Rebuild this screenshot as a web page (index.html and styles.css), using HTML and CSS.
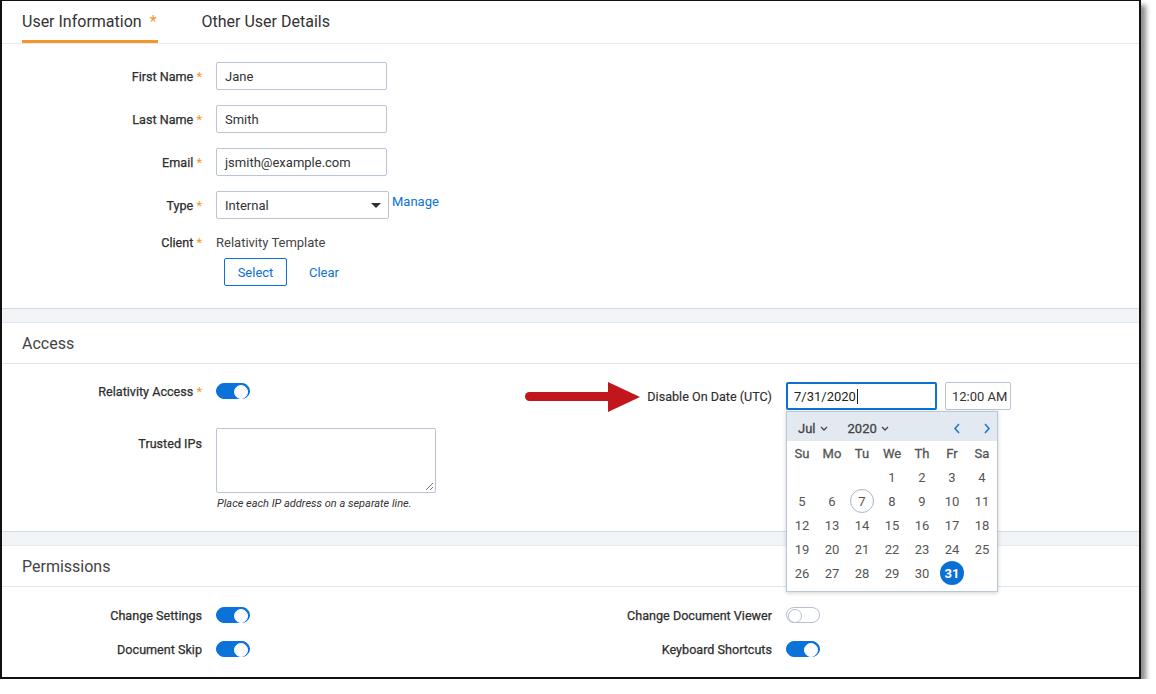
FILE: index.html
```html
<!DOCTYPE html>
<html>
<head lang="en">
    <meta charset="UTF-8">
    <title>User Information</title>
    <link rel="stylesheet" href="styles.css">
</head>
<body>
<div class="frame">
    <div class="tabs">
        <div class="tab active">User Information <span class="req tab-req">*</span></div>
        <div class="tab">Other User Details</div>
    </div>

    <!-- 基本信息 -->
    <div class="section first">
        <div class="row">
            <div class="label">First Name <span class="req">*</span></div>
            <div class="input">Jane</div>
        </div>
        <div class="row">
            <div class="label">Last Name <span class="req">*</span></div>
            <div class="input">Smith</div>
        </div>
        <div class="row">
            <div class="label">Email <span class="req">*</span></div>
            <div class="input">jsmith@example.com</div>
        </div>
        <div class="row">
            <div class="label">Type <span class="req">*</span></div>
            <div class="input select">Internal <span class="caret"></span></div>
            <a class="link manage">Manage</a>
        </div>
        <div class="row text-row">
            <div class="label">Client <span class="req">*</span></div>
            <div class="value">Relativity Template</div>
        </div>
        <div class="row btn-row">
            <div class="btn">Select</div>
            <a class="link">Clear</a>
        </div>
    </div>

    <div class="sep"></div>

    <!-- Access -->
    <div class="section">
        <div class="section-head">Access</div>
        <div class="cols">
            <div class="col left">
                <div class="row toggle-row">
                    <div class="label">Relativity Access <span class="req">*</span></div>
                    <div class="toggle on"></div>
                </div>
                <div class="row area-row">
                    <div class="label">Trusted IPs</div>
                    <div>
                        <div class="textarea"><span class="grip"></span></div>
                        <div class="hint">Place each IP address on a separate line.</div>
                    </div>
                </div>
            </div>
            <div class="col right">
                <div class="row">
                    <div class="label plain">Disable On Date (UTC)</div>
                    <div class="date-wrap">
                        <div class="input date">7/31/2020<span class="cursor"></span></div>
                        <div class="calendar">
                            <div class="cal-head">
                                <span class="cal-sel">Jul <svg width="8" height="5" viewBox="0 0 8 5"><path d="M1 1l3 3 3-3" fill="none" stroke="#444" stroke-width="1.3"/></svg></span>
                                <span class="cal-sel">2020 <svg width="8" height="5" viewBox="0 0 8 5"><path d="M1 1l3 3 3-3" fill="none" stroke="#444" stroke-width="1.3"/></svg></span>
                                <span class="cal-nav">
                                    <svg width="8" height="11" viewBox="0 0 8 11"><path d="M6 1L2 5.5 6 10" fill="none" stroke="#1f78d1" stroke-width="1.6"/></svg>
                                    <svg width="8" height="11" viewBox="0 0 8 11"><path d="M2 1l4 4.5L2 10" fill="none" stroke="#1f78d1" stroke-width="1.6"/></svg>
                                </span>
                            </div>
                            <div class="cal-grid">
                                <span class="dn">Su</span><span class="dn">Mo</span><span class="dn">Tu</span><span class="dn">We</span><span class="dn">Th</span><span class="dn">Fr</span><span class="dn">Sa</span>
                                <span></span><span></span><span></span><span>1</span><span>2</span><span>3</span><span>4</span>
                                <span>5</span><span>6</span><span><i class="today">7</i></span><span>8</span><span>9</span><span>10</span><span>11</span>
                                <span>12</span><span>13</span><span>14</span><span>15</span><span>16</span><span>17</span><span>18</span>
                                <span>19</span><span>20</span><span>21</span><span>22</span><span>23</span><span>24</span><span>25</span>
                                <span>26</span><span>27</span><span>28</span><span>29</span><span>30</span><span><i class="picked">31</i></span><span></span>
                            </div>
                        </div>
                    </div>
                    <div class="input time">12:00 AM</div>
                </div>
            </div>
        </div>
    </div>

    <div class="sep"></div>

    <!-- Permissions -->
    <div class="section">
        <div class="section-head">Permissions</div>
        <div class="cols perms">
            <div class="col left">
                <div class="row toggle-row">
                    <div class="label">Change Settings</div>
                    <div class="toggle on"></div>
                </div>
                <div class="row toggle-row">
                    <div class="label">Document Skip</div>
                    <div class="toggle on"></div>
                </div>
            </div>
            <div class="col right">
                <div class="row toggle-row">
                    <div class="label">Change Document Viewer</div>
                    <div class="toggle"></div>
                </div>
                <div class="row toggle-row">
                    <div class="label">Keyboard Shortcuts</div>
                    <div class="toggle on"></div>
                </div>
            </div>
        </div>
    </div>

    <!-- 红色箭头标注 -->
    <svg class="arrow" width="118" height="32" viewBox="0 0 118 32">
        <rect x="1" y="11" width="88" height="9" rx="4.5" fill="#c1161c"/>
        <polygon points="84,1 116,16 84,31" fill="#c1161c"/>
    </svg>
</div>
</body>
</html>
```

FILE: styles.css
```css
* {
    margin: 0;
    padding: 0;
    box-sizing: border-box;
}

body {
    font-family: Roboto, "Liberation Sans", Arial, sans-serif;
    font-size: 13px;
    color: #333;
    background: #fff;
}

.frame {
    width: 1141px;
    height: 679px;
    border: 1px solid #111;
    border-width: 1px 2px 2px 2px;
    box-shadow: 5px 5px 5px rgba(0, 0, 0, 0.45);
    position: relative;
    overflow: hidden;
    background: #fff;
}

/* tabs */
.tabs {
    display: flex;
    height: 43px;
    border-bottom: 1px solid #e6e9ef;
    padding-left: 20px;
}

.tab {
    display: flex;
    align-items: center;
    height: 42px;
    font-size: 16px;
    color: #333;
    margin-right: 44px;
    border-bottom: 3px solid transparent;
    padding-top: 1px;
}

.tab.active {
    border-bottom-color: #f5962a;
}

.tab-req {
    margin-left: 8px;
    margin-right: 1px;
}

.req {
    color: #f5962a;
}

/* sections */
.section.first {
    padding: 18px 0 22px;
}

.sep {
    height: 15px;
    background: #f2f5f8;
    border-top: 1px solid #d3dae3;
    border-bottom: 1px solid #e3e8ee;
}

.section-head {
    height: 41px;
    border-bottom: 1px solid #e1e6ec;
    font-size: 16px;
    color: #444;
    padding-left: 20px;
    display: flex;
    align-items: center;
}

.row {
    display: flex;
    align-items: center;
    height: 28px;
    margin-bottom: 15px;
}

.label {
    width: 200px;
    text-align: right;
    font-size: 12.6px;
    color: #2e2e2e;
    -webkit-text-stroke: 0.25px #2e2e2e;
    margin-right: 14px;
    flex-shrink: 0;
}

.label .req {
    -webkit-text-stroke: 0;
    font-size: 13px;
}

.label.plain {
    -webkit-text-stroke: 0.15px #2e2e2e;
}

.input {
    width: 171px;
    height: 28px;
    border: 1px solid #b9c5d6;
    border-radius: 2px;
    padding: 0 8px;
    display: flex;
    align-items: center;
    color: #333;
    white-space: nowrap;
}

.select {
    width: 173px;
    justify-content: space-between;
}

.caret {
    width: 0;
    height: 0;
    border-left: 5px solid transparent;
    border-right: 5px solid transparent;
    border-top: 5px solid #333;
    margin-right: -1px;
}

.link {
    color: #0b72d9;
    cursor: pointer;
}

.manage {
    align-self: flex-start;
    margin-left: 3px;
    margin-top: 3px;
}

.text-row {
    height: 16px;
    margin-bottom: 8px;
}

.value {
    color: #444;
}

.btn-row {
    margin-bottom: 0;
    padding-left: 222px;
}

.btn {
    width: 63px;
    height: 28px;
    border: 1px solid #0b6fd6;
    border-radius: 2px;
    color: #0b6fd6;
    display: flex;
    align-items: center;
    justify-content: center;
    margin-right: 22px;
}

/* two columns */
.cols {
    display: flex;
}

.col.left {
    width: 570px;
    padding: 19px 0 21px;
}

.col.right {
    flex: 1;
    padding-top: 18px;
}

.perms .col.left,
.perms .col.right {
    padding-top: 20px;
}

.toggle-row {
    height: 16px;
    margin-bottom: 18px;
}

.toggle {
    width: 34px;
    height: 16px;
    border-radius: 8px;
    border: 1px solid #b4c0d0;
    background: #fff;
    position: relative;
}

.toggle::after {
    content: "";
    position: absolute;
    left: 1px;
    top: 1px;
    width: 12px;
    height: 12px;
    border-radius: 50%;
    border: 1px solid #b4c0d0;
    background: #fff;
}

.toggle.on {
    background: #0b72d9;
    border-color: #0b72d9;
}

.toggle.on::after {
    left: auto;
    right: 1px;
    border-color: #fff;
}

.area-row {
    align-items: flex-start;
    height: auto;
    margin-top: 29px;
    margin-bottom: 0;
}

.area-row .label {
    padding-top: 8px;
}

.textarea {
    width: 220px;
    height: 65px;
    border: 1px solid #b9c5d6;
    border-radius: 2px;
    position: relative;
}

.grip {
    position: absolute;
    right: 2px;
    bottom: 2px;
    width: 7px;
    height: 7px;
    background: linear-gradient(135deg, transparent 45%, #777 46%, #777 52%, transparent 53%, transparent 72%, #777 73%, #777 80%, transparent 81%);
}

.hint {
    font-size: 11px;
    font-style: italic;
    color: #333;
    margin-top: 4px;
    padding-left: 1px;
}

/* date picker */
.date-wrap {
    position: relative;
    margin-right: 8px;
}

.date {
    width: 151px;
    border: 2px solid #0b6fd6;
    padding: 0 6px;
    color: #222;
}

.cursor {
    display: inline-block;
    width: 1px;
    height: 15px;
    background: #222;
    margin-left: 1px;
}

.time {
    width: 66px;
    padding: 0 6px;
}

.calendar {
    position: absolute;
    left: 0;
    top: 29px;
    width: 212px;
    height: 181px;
    border: 1px solid #b9c6d6;
    background: #fff;
    box-shadow: 0 1px 4px rgba(0, 0, 0, 0.18);
    z-index: 5;
}

.cal-head {
    height: 29px;
    background: #e3e9f1;
    display: flex;
    align-items: center;
    padding-left: 11px;
    padding-top: 3px;
}

.cal-sel {
    color: #444;
    -webkit-text-stroke: 0.3px #444;
    margin-right: 20px;
    display: flex;
    align-items: center;
}

.cal-sel svg {
    margin-left: 4px;
}

.cal-nav {
    margin-left: auto;
    display: flex;
    gap: 22px;
    padding-right: 6px;
}

.cal-grid {
    display: grid;
    grid-template-columns: repeat(7, 30px);
    grid-auto-rows: 24px;
}

.cal-grid span {
    display: flex;
    align-items: center;
    justify-content: center;
    color: #555;
}

.cal-grid .dn {
    color: #555;
    -webkit-text-stroke: 0.3px #555;
}

.cal-grid i {
    font-style: normal;
    width: 24px;
    height: 24px;
    border-radius: 50%;
    display: flex;
    align-items: center;
    justify-content: center;
}

.today {
    border: 1px solid #a9b6c6;
}

.picked {
    background: #0b6fd6;
    color: #fff;
    font-weight: 700;
}

.arrow {
    position: absolute;
    left: 522px;
    top: 380px;
}
```
